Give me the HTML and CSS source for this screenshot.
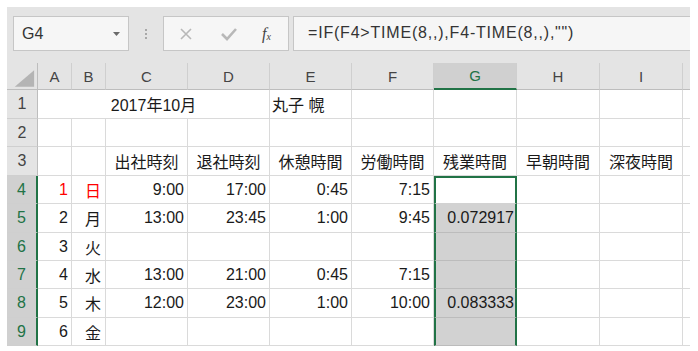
FILE: index.html
```html
<!DOCTYPE html>
<html lang="ja">
<head>
    <meta charset="UTF-8">
    <title>残業時間</title>
    <link rel="stylesheet" href="styles.css">
</head>
<body>
    <div class="excel">
        <div class="fbar">
            <div class="namebox">
                <span>G4</span>
                <svg class="dd" width="7" height="4" viewBox="0 0 7 4"><polygon points="0,0 7,0 3.5,4" fill="#6a6a6a"/></svg>
            </div>
            <div class="grip"><i></i><i></i><i></i></div>
            <div class="fbtns">
                <svg width="14" height="14" viewBox="0 0 14 14"><path d="M2 2 L12 12 M12 2 L2 12" stroke="#b8b8b8" stroke-width="1.6" fill="none"/></svg>
                <svg class="ok" width="18" height="14" viewBox="0 0 18 14"><polyline points="2,7 7,12 16,2" stroke="#b8b8b8" stroke-width="2.6" fill="none"/></svg>
                <span class="fx">f<sub>x</sub></span>
            </div>
            <div class="finput">=IF(F4&gt;TIME(8,,),F4-TIME(8,,),"")</div>
        </div>

        <div class="sheet">
            <div class="r hdr">
                <div class="corner"><svg width="31" height="27" viewBox="0 0 31 27"><polygon points="28,7 28,24 8,24" fill="#b4b4b4"/></svg></div>
                <div>A</div><div>B</div><div>C</div><div>D</div><div>E</div><div>F</div>
                <div class="on">G</div><div>H</div><div>I</div><div></div>
            </div>
            <div class="r t">
                <div class="rh">1</div>
                <div class="merge">2017年10月</div>
                <div class="l">丸子 幌</div><div></div><div></div><div></div><div></div><div></div>
            </div>
            <div class="r">
                <div class="rh">2</div>
                <div></div><div></div><div></div><div></div><div></div><div></div><div></div><div></div><div></div><div></div>
            </div>
            <div class="r t">
                <div class="rh">3</div>
                <div></div><div></div>
                <div class="c jp">出社時刻</div><div class="c jp">退社時刻</div><div class="c jp">休憩時間</div><div class="c jp">労働時間</div>
                <div class="c jp">残業時間</div><div class="c jp">早朝時間</div><div class="c jp">深夜時間</div><div></div>
            </div>
            <div class="r">
                <div class="rh on">4</div>
                <div class="n red">1</div><div class="d jp red">日</div>
                <div class="n">9:00</div><div class="n">17:00</div><div class="n">0:45</div><div class="n">7:15</div>
                <div class="s top"></div><div></div><div></div><div></div>
            </div>
            <div class="r t">
                <div class="rh on">5</div>
                <div class="n">2</div><div class="d jp">月</div>
                <div class="n">13:00</div><div class="n">23:45</div><div class="n">1:00</div><div class="n">9:45</div>
                <div class="s n">0.072917</div><div></div><div></div><div></div>
            </div>
            <div class="r">
                <div class="rh on">6</div>
                <div class="n">3</div><div class="d jp">火</div>
                <div></div><div></div><div></div><div></div>
                <div class="s"></div><div></div><div></div><div></div>
            </div>
            <div class="r">
                <div class="rh on">7</div>
                <div class="n">4</div><div class="d jp">水</div>
                <div class="n">13:00</div><div class="n">21:00</div><div class="n">0:45</div><div class="n">7:15</div>
                <div class="s"></div><div></div><div></div><div></div>
            </div>
            <div class="r t">
                <div class="rh on">8</div>
                <div class="n">5</div><div class="d jp">木</div>
                <div class="n">12:00</div><div class="n">23:00</div><div class="n">1:00</div><div class="n">10:00</div>
                <div class="s n">0.083333</div><div></div><div></div><div></div>
            </div>
            <div class="r">
                <div class="rh on">9</div>
                <div class="n">6</div><div class="d jp">金</div>
                <div></div><div></div><div></div><div></div>
                <div class="s"></div><div></div><div></div><div></div>
            </div>
        </div>
    </div>
</body>
</html>
```

FILE: styles.css
```css
body{
    margin: 0;
    background: #fff;
}
.excel{
    width: 683px;
    height: 339px;
    margin: 7px;
    overflow: hidden;
    background: #fff;
    font-family: "Liberation Sans", "Noto Sans CJK JP", sans-serif;
    color: #1a1a1a;
}

/* formula bar */
.fbar{
    display: flex;
    align-items: flex-start;
    height: 56px;
    box-sizing: border-box;
    padding: 9px 0 0 6px;
    background: #e4e4e4;
}
.namebox{
    display: flex;
    align-items: center;
    justify-content: space-between;
    width: 116px;
    height: 35px;
    box-sizing: border-box;
    padding: 0 8px;
    border: 1px solid #c6c6c6;
    background: #f6f6f6;
    font-size: 16px;
    color: #333;
}
.grip{
    display: flex;
    flex-direction: column;
    align-items: center;
    justify-content: center;
    gap: 2px;
    width: 34px;
    height: 35px;
}
.grip i{
    width: 2px;
    height: 2px;
    background: #a8a8a8;
}
.fbtns{
    display: flex;
    align-items: center;
    width: 126px;
    height: 35px;
    box-sizing: border-box;
    padding-left: 15px;
    border: 1px solid #c6c6c6;
    background: #f6f6f6;
}
.fbtns .ok{
    margin-left: 27px;
}
.fbtns .fx{
    margin-left: 24px;
    font-family: "Liberation Serif", serif;
    font-style: italic;
    font-size: 16px;
    color: #444;
}
.fbtns .fx sub{
    font-size: 10px;
    vertical-align: -1px;
}
.finput{
    flex: 1;
    height: 35px;
    box-sizing: border-box;
    margin-left: 4px;
    padding-left: 14px;
    border: 1px solid #c6c6c6;
    border-right: none;
    background: #f6f6f6;
    font-size: 16px;
    letter-spacing: 0.8px;
    line-height: 31px;
    color: #333;
    white-space: nowrap;
}

/* grid */
.r{
    display: grid;
    grid-template-columns: 31px 34px 34px 82px 82px 82px 82px 83px 83px 83px 7px;
    height: 28px;
}
.r.t{
    height: 29px;
}
.r > div{
    display: flex;
    align-items: center;
    box-sizing: border-box;
    padding: 0 3px;
    border-right: 1px solid #dadada;
    border-bottom: 1px solid #dadada;
    font-size: 16px;
    white-space: nowrap;
    overflow: hidden;
}
.r > div:last-child{
    border-right: none;
}
.r .n{
    justify-content: flex-end;
}
.r .c{
    justify-content: center;
}
.r .l{
    padding-left: 2px;
}
.r .d{
    padding-left: 13px;
}
.r .merge{
    grid-column: span 4;
    justify-content: center;
}
.r .jp{
    font-size: 16px;
}
.r .red{
    color: #f00;
}

.hdr{
    height: 27px;
}
.hdr > div{
    justify-content: center;
    background: #e4e4e4;
    border-right-color: #cfcfcf;
    border-bottom-color: #bdbdbd;
    font-size: 15px;
    color: #444;
}
.hdr .corner{
    padding: 0;
    border-right-color: #bdbdbd;
}
.hdr .on{
    background: #d0d0d0;
    border-bottom: 2px solid #217346;
    color: #217346;
}

.r .rh{
    justify-content: center;
    background: #e4e4e4;
    border-right-color: #bdbdbd;
    border-bottom-color: #cfcfcf;
    color: #444;
}
.r .rh.on{
    background: #d0d0d0;
    border-right: 2px solid #217346;
    color: #217346;
}

/* selected range G4:G9 */
.r .s{
    background: #d2d2d2;
    border-left: 2px solid #217346;
    border-right: 2px solid #217346;
    border-bottom-color: #bcbcbc;
    padding-right: 1px;
}
.r .s.top{
    background: #fff;
    border-top: 2px solid #217346;
    border-bottom-color: #d2d2d2;
}
```
